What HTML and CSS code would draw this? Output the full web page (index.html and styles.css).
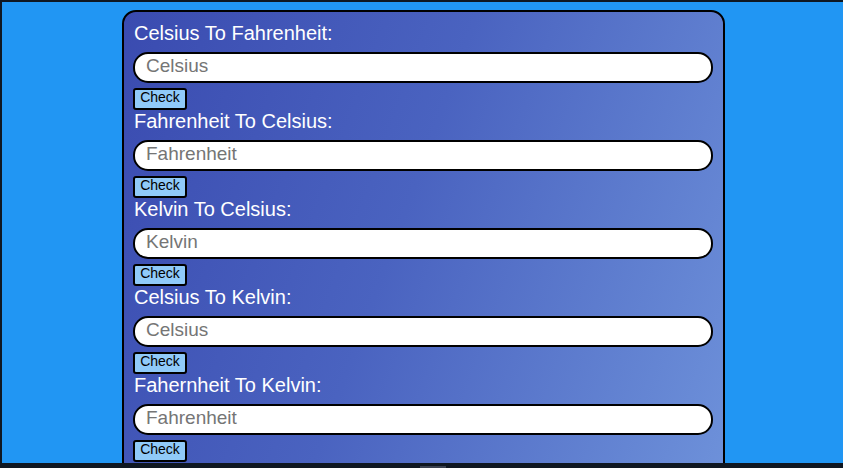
FILE: index.html
```html
<!DOCTYPE html>
<html>
<head>
<meta charset="utf-8">
<link rel="stylesheet" href="styles.css">
</head>
<body>
<div class="screen">
  <div class="page">
    <div class="card">
      <div class="section">
        <div class="label">Celsius To Fahrenheit:</div>
        <input class="field" type="text" placeholder="Celsius">
        <button class="check">Check</button>
      </div>
      <div class="section">
        <div class="label">Fahrenheit To Celsius:</div>
        <input class="field" type="text" placeholder="Fahrenheit">
        <button class="check">Check</button>
      </div>
      <div class="section">
        <div class="label">Kelvin To Celsius:</div>
        <input class="field" type="text" placeholder="Kelvin">
        <button class="check">Check</button>
      </div>
      <div class="section">
        <div class="label">Celsius To Kelvin:</div>
        <input class="field" type="text" placeholder="Celsius">
        <button class="check">Check</button>
      </div>
      <div class="section">
        <div class="label">Fahernheit To Kelvin:</div>
        <input class="field" type="text" placeholder="Fahrenheit">
        <button class="check">Check</button>
      </div>
    </div>
  </div>
  <div class="taskbar"><span class="tab"></span></div>
</div>
</body>
</html>
```
FILE: styles.css
```css
html, body {
  margin: 0;
  padding: 0;
  height: 100%;
  overflow: hidden;
  background: #0f1721;
}
.screen {
  display: flex;
  flex-direction: column;
  height: 468px;
  padding: 2px 0 0 2px;
  box-sizing: border-box;
}
.page {
  flex: 0 0 461px;
  background: #2196f3;
  overflow: hidden;
  padding: 8px 0 0 2px;
  box-sizing: border-box;
}
.card {
  width: 603px;
  height: 520px;
  margin: 0 auto;
  box-sizing: border-box;
  border: 2px solid #000;
  border-radius: 14px;
  background: linear-gradient(110deg, #3a4bb0 0%, #4a63c0 45%, #6f93db 100%);
  padding: 10px 10px 10px 9px;
  font-family: "Liberation Sans", Arial, sans-serif;
}
.section {
  display: flex;
  flex-direction: column;
  align-items: flex-start;
}
.label {
  color: #fff;
  font-size: 20px;
  line-height: 22px;
  height: 22px;
  margin: 0 0 8px 1px;
}
.field {
  width: 100%;
  height: 31px;
  box-sizing: border-box;
  border: 2px solid #000;
  border-radius: 15px;
  background: #fff;
  padding: 0 11px 3px 11px;
  font-family: "Liberation Sans", Arial, sans-serif;
  font-size: 19px;
  color: #333;
  outline: none;
  margin: 0;
}
.field::placeholder {
  color: #757575;
}
.check {
  margin-top: 5px;
  height: 22px;
  width: 54px;
  box-sizing: border-box;
  background: #90caf9;
  border: 2px solid #000;
  border-radius: 3px;
  font-family: "Liberation Sans", Arial, sans-serif;
  font-size: 14px;
  color: #000;
  padding: 0 0 3px 0;
  line-height: 15px;
}
.taskbar {
  flex: 1;
  position: relative;
  background: #0f1721;
}
.tab {
  position: absolute;
  left: 418px;
  top: 3px;
  width: 26px;
  height: 3px;
  background: #3a4150;
}
```
